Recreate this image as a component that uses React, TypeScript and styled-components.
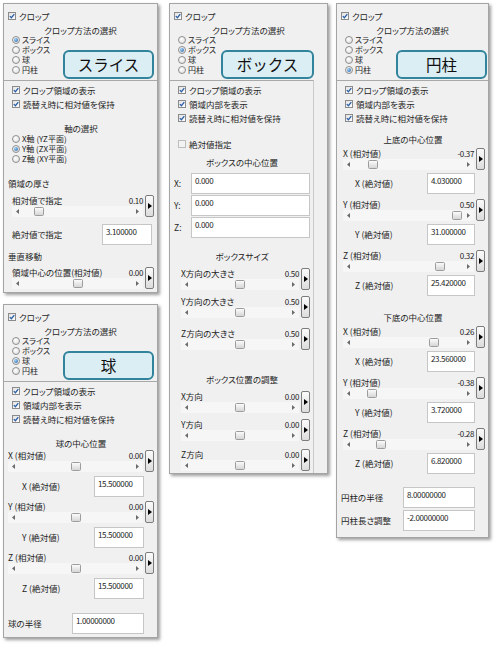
import React from 'react';
import styled, { createGlobalStyle } from 'styled-components';

const GlobalStyle = createGlobalStyle`
  html, body {
    margin: 0;
    padding: 0;
    background: #ffffff;
  }
  body {
    font-family: "Noto Sans CJK JP", "Noto Sans", sans-serif;
  }
`;

const Page = styled.div`
  width: 497px;
  height: 647px;
  box-sizing: border-box;
  padding: 3px 0 0 3px;
  display: flex;
  align-items: flex-start;
  background: #ffffff;
  overflow: hidden;
`;

const Column = styled.div<{ $mr: number }>`
  display: flex;
  flex-direction: column;
  gap: 11px;
  margin-right: ${p => p.$mr}px;
`;

const Panel = styled.div<{ $w: number; $h: number }>`
  width: ${p => p.$w}px;
  height: ${p => p.$h}px;
  box-sizing: border-box;
  border: 1px solid #a4a4a4;
  background: #f0f0f0;
  box-shadow: 2px 2px 3px rgba(0, 0, 0, 0.38);
  display: flex;
  flex-direction: column;
  color: #1d1d1d;
  font-size: 8.5px;
  line-height: 1;
  font-feature-settings: "palt" 1;
  white-space: nowrap;
`;

const Top = styled.div`
  height: 76px;
  box-sizing: border-box;
  padding: 6px 0 0 4px;
  display: flex;
  flex-direction: column;
`;

const CropRow = styled.div`
  display: flex;
  align-items: center;
  gap: 3px;
  height: 12px;
`;

const MethodTitle = styled.div`
  height: 10px;
  line-height: 10px;
  margin-top: 3px;
  text-align: center;
  padding-right: 4px;
`;

const MethodArea = styled.div`
  display: flex;
  align-items: flex-start;
`;

const RadioList = styled.div`
  display: flex;
  flex-direction: column;
  margin-left: 4px;
`;

const RadioRow = styled.div`
  display: flex;
  align-items: center;
  gap: 2px;
  height: 10px;
`;

const RadioLabel = styled.span`
  display: block;
  height: 10px;
  line-height: 10px;
  font-size: 8px;
  overflow: visible;
`;

const Callout = styled.div<{ $w: number; $mr: number }>`
  margin-left: auto;
  margin-right: ${p => p.$mr}px;
  margin-top: 15px;
  width: ${p => p.$w}px;
  height: 29px;
  box-sizing: border-box;
  border: 2px solid #31849b;
  border-radius: 6px;
  background: #dbeef4;
  display: flex;
  align-items: center;
  justify-content: center;
  font-size: 15.5px;
  font-feature-settings: normal;
  color: #101010;
`;

const Lower = styled.div<{ $gutter: number }>`
  flex: 1;
  display: flex;
  flex-direction: column;
  border-top: 1px solid #a9a9a9;
  border-right: ${p => (p.$gutter ? '1px solid #c9c9c9' : 'none')};
  margin-right: ${p => p.$gutter}px;
  padding: 2px 3px 0 4px;
`;

const CheckRow = styled.div<{ $mt?: number }>`
  display: flex;
  align-items: center;
  gap: 3px;
  height: 14px;
  padding-left: 4px;
  margin-top: ${p => p.$mt ?? 0}px;
`;

const Box = styled.span<{ $disabled?: boolean }>`
  width: 8px;
  height: 8px;
  box-sizing: border-box;
  flex-shrink: 0;
  border: 1px solid ${p => (p.$disabled ? '#bdbdbd' : '#8b8b8b')};
  background: ${p => (p.$disabled ? '#f3f3f3' : 'linear-gradient(135deg, #e2e2e2, #ffffff)')};
  display: inline-flex;
  align-items: center;
  justify-content: center;
`;

const RadioDot = styled.span<{ $on: boolean }>`
  width: 8px;
  height: 8px;
  box-sizing: border-box;
  flex-shrink: 0;
  border-radius: 50%;
  border: 1px solid #8f8f8f;
  background: radial-gradient(circle at 40% 35%, #ffffff, #d9d9d9);
  display: inline-flex;
  align-items: center;
  justify-content: center;

  &::after {
    content: '';
    width: 4px;
    height: 4px;
    border-radius: 50%;
    background: ${p => (p.$on ? 'radial-gradient(circle at 35% 35%, #9fd0f5, #1d5ea8)' : 'transparent')};
  }
`;

const SectionTitle = styled.div<{ $mt: number }>`
  height: 12px;
  line-height: 12px;
  margin-top: ${p => p.$mt}px;
  text-align: center;
`;

const Heading = styled.div<{ $mt: number }>`
  height: 12px;
  line-height: 12px;
  margin-top: ${p => p.$mt}px;
`;

const AxisList = styled.div`
  display: flex;
  flex-direction: column;
  padding-left: 4px;
`;

const SliderBlock = styled.div<{ $mt: number; $ml: number }>`
  display: grid;
  grid-template-columns: 1fr 9px;
  grid-template-rows: 11px 11px;
  column-gap: 2px;
  margin-top: ${p => p.$mt}px;
  margin-left: ${p => p.$ml}px;
`;

const SliderHead = styled.div`
  display: flex;
  align-items: center;
  justify-content: space-between;
`;

const Num = styled.span`
  font-family: "Noto Sans CJK JP", "Noto Sans", sans-serif;
  font-size: 8px;
  letter-spacing: -0.35px;
`;

const StepButton = styled.div`
  grid-column: 2;
  grid-row: 1 / span 2;
  box-sizing: border-box;
  border: 1px solid #7c7c7c;
  border-radius: 2px;
  background: linear-gradient(180deg, #fbfbfb, #dcdcdc);
  display: flex;
  align-items: center;
  justify-content: center;
`;

const Track = styled.div`
  position: relative;
  display: flex;
  align-items: center;
  justify-content: space-between;
  padding: 0 4px;
  background: #f6f6f6;
`;

const Thumb = styled.div`
  position: absolute;
  top: 1px;
  width: 10px;
  height: 9px;
  box-sizing: border-box;
  border: 1px solid #9c9c9c;
  border-radius: 1.5px;
  background: linear-gradient(180deg, #fbfbfb, #d6d6d6);
`;

const AbsRow = styled.div<{ $mt: number; $indent: number; $pr: number }>`
  display: flex;
  align-items: center;
  height: 21px;
  margin-top: ${p => p.$mt}px;
  padding-left: ${p => p.$indent}px;
  padding-right: ${p => p.$pr}px;
`;

const AbsLabel = styled.span<{ $w?: number }>`
  flex: ${p => (p.$w ? `0 0 ${p.$w}px` : '1')};
`;

const TextBox = styled.div<{ $w?: number }>`
  flex: ${p => (p.$w ? `0 0 ${p.$w}px` : '1')};
  height: 21px;
  box-sizing: border-box;
  border: 1px solid #c6c6c6;
  background: #ffffff;
  padding: 2px 3px 0;
  line-height: 9px;
`;

const Check = ({ label, mt, off }: { label: string; mt?: number; off?: boolean }) => (
  <CheckRow $mt={mt}>
    <Box $disabled={off}>
      {!off && (
        <svg width="6" height="6" viewBox="0 0 6 6">
          <path d="M0.8 3.1 L2.4 4.7 L5.3 1.1" fill="none" stroke="#2b5fa6" strokeWidth="1.3" />
        </svg>
      )}
    </Box>
    <span>{label}</span>
  </CheckRow>
);

const Radio = ({ label, on }: { label: string; on?: boolean }) => (
  <RadioRow>
    <RadioDot $on={!!on} />
    <RadioLabel>{label}</RadioLabel>
  </RadioRow>
);

const methods = ['スライス', 'ボックス', '球', '円柱'];

const CropHeader = ({ method, calloutW, calloutMr }: { method: number; calloutW: number; calloutMr: number }) => (
  <Top>
    <CropRow>
      <Box>
        <svg width="6" height="6" viewBox="0 0 6 6">
          <path d="M0.8 3.1 L2.4 4.7 L5.3 1.1" fill="none" stroke="#2b5fa6" strokeWidth="1.3" />
        </svg>
      </Box>
      <span>クロップ</span>
    </CropRow>
    <MethodTitle>クロップ方法の選択</MethodTitle>
    <MethodArea>
      <RadioList>
        {methods.map((m, i) => (
          <Radio key={m} label={m} on={i === method} />
        ))}
      </RadioList>
      <Callout $w={calloutW} $mr={calloutMr}>{methods[method]}</Callout>
    </MethodArea>
  </Top>
);

interface SliderProps {
  label: string;
  value: string;
  frac: number;
  mt: number;
  ml: number;
}

const Slider = ({ label, value, frac, mt, ml }: SliderProps) => (
  <SliderBlock $mt={mt} $ml={ml}>
    <SliderHead>
      <span>{label}</span>
      <Num>{value}</Num>
    </SliderHead>
    <StepButton>
      <svg width="4" height="6" viewBox="0 0 4 6">
        <path d="M0 0 L4 3 L0 6 Z" fill="#000" />
      </svg>
    </StepButton>
    <Track>
      <svg width="3" height="5" viewBox="0 0 3 5">
        <path d="M3 0 L0 2.5 L3 5 Z" fill="#6a6a6a" />
      </svg>
      <Thumb style={{ left: `calc(12px + (100% - 34px) * ${frac})` }} />
      <svg width="3" height="5" viewBox="0 0 3 5">
        <path d="M0 0 L3 2.5 L0 5 Z" fill="#6a6a6a" />
      </svg>
    </Track>
  </SliderBlock>
);

interface AbsProps {
  label: string;
  value: string;
  mt: number;
  indent: number;
  pr: number;
  boxW?: number;
  labelW?: number;
}

const AbsField = ({ label, value, mt, indent, pr, boxW, labelW }: AbsProps) => (
  <AbsRow $mt={mt} $indent={indent} $pr={pr}>
    <AbsLabel $w={labelW}>{label}</AbsLabel>
    <TextBox $w={boxW}>
      <Num>{value}</Num>
    </TextBox>
  </AbsRow>
);

// -0.5..0.5 -> 0..1
const rel = (v: number) => v + 0.5;

const SlicePanel = () => (
  <Panel $w={155} $h={290}>
    <CropHeader method={0} calloutW={91} calloutMr={3} />
    <Lower $gutter={0}>
      <Check label="クロップ領域の表示" />
      <Check label="読替え時に相対値を保持" />
      <SectionTitle $mt={11}>軸の選択</SectionTitle>
      <AxisList>
        <Radio label="X軸 (YZ平面)" />
        <Radio label="Y軸 (ZX平面)" on />
        <Radio label="Z軸 (XY平面)" />
      </AxisList>
      <Heading $mt={13}>領域の厚さ</Heading>
      <Slider label="相対値で指定" value="0.10" frac={0.1} mt={6} ml={4} />
      <AbsField label="絶対値で指定" value="3.100000" mt={7} indent={4} pr={2} boxW={50} />
      <Heading $mt={5}>垂直移動</Heading>
      <Slider label="領域中心の位置(相対値)" value="0.00" frac={rel(0)} mt={5} ml={4} />
    </Lower>
  </Panel>
);

const SpherePanel = () => (
  <Panel $w={155} $h={334}>
    <CropHeader method={2} calloutW={91} calloutMr={3} />
    <Lower $gutter={0}>
      <Check label="クロップ領域の表示" />
      <Check label="領域内部を表示" />
      <Check label="読替え時に相対値を保持" />
      <SectionTitle $mt={11}>球の中心位置</SectionTitle>
      <Slider label="X (相対値)" value="0.00" frac={rel(0)} mt={1} ml={0} />
      <AbsField label="X (絶対値)" value="15.500000" mt={4} indent={14} pr={10} boxW={50} />
      <Slider label="Y (相対値)" value="0.00" frac={rel(0)} mt={4} ml={0} />
      <AbsField label="Y (絶対値)" value="15.500000" mt={4} indent={14} pr={10} boxW={50} />
      <Slider label="Z (相対値)" value="0.00" frac={rel(0)} mt={4} ml={0} />
      <AbsField label="Z (絶対値)" value="15.500000" mt={4} indent={14} pr={10} boxW={50} />
      <AbsField label="球の半径" value="1.00000000" mt={14} indent={0} pr={10} boxW={72} />
    </Lower>
  </Panel>
);

const BoxPanel = () => (
  <Panel $w={159} $h={471}>
    <CropHeader method={1} calloutW={93} calloutMr={13} />
    <Lower $gutter={13}>
      <Check label="クロップ領域の表示" />
      <Check label="領域内部を表示" />
      <Check label="読替え時に相対値を保持" />
      <Check label="絶対値指定" mt={12} off />
      <SectionTitle $mt={5}>ボックスの中心位置</SectionTitle>
      <AbsField label="X:" value="0.000" mt={5} indent={0} pr={0} labelW={17} />
      <AbsField label="Y:" value="0.000" mt={1} indent={0} pr={0} labelW={17} />
      <AbsField label="Z:" value="0.000" mt={1} indent={0} pr={0} labelW={17} />
      <SectionTitle $mt={12}>ボックスサイズ</SectionTitle>
      <Slider label="X方向の大きさ" value="0.50" frac={0.5} mt={6} ml={7} />
      <Slider label="Y方向の大きさ" value="0.50" frac={0.5} mt={6} ml={7} />
      <Slider label="Z方向の大きさ" value="0.50" frac={0.5} mt={10} ml={7} />
      <SectionTitle $mt={23}>ボックス位置の調整</SectionTitle>
      <Slider label="X方向" value="0.00" frac={rel(0)} mt={6} ml={7} />
      <Slider label="Y方向" value="0.00" frac={rel(0)} mt={6} ml={7} />
      <Slider label="Z方向" value="0.00" frac={rel(0)} mt={8} ml={7} />
    </Lower>
  </Panel>
);

const CylinderPanel = () => (
  <Panel $w={153} $h={535}>
    <CropHeader method={3} calloutW={91} calloutMr={1} />
    <Lower $gutter={0}>
      <Check label="クロップ領域の表示" />
      <Check label="領域内部を表示" />
      <Check label="読替え時に相対値を保持" />
      <SectionTitle $mt={8}>上底の中心位置</SectionTitle>
      <Slider label="X (相対値)" value="-0.37" frac={rel(-0.37)} mt={3} ml={2} />
      <AbsField label="X (絶対値)" value="4.030000" mt={3} indent={14} pr={10} boxW={48} />
      <Slider label="Y (相対値)" value="0.50" frac={rel(0.5)} mt={5} ml={2} />
      <AbsField label="Y (絶対値)" value="31.000000" mt={3} indent={14} pr={10} boxW={48} />
      <Slider label="Z (相対値)" value="0.32" frac={rel(0.32)} mt={5} ml={2} />
      <AbsField label="Z (絶対値)" value="25.420000" mt={3} indent={14} pr={10} boxW={48} />
      <SectionTitle $mt={15}>下底の中心位置</SectionTitle>
      <Slider label="X (相対値)" value="0.26" frac={rel(0.26)} mt={3} ml={2} />
      <AbsField label="X (絶対値)" value="23.560000" mt={3} indent={14} pr={10} boxW={48} />
      <Slider label="Y (相対値)" value="-0.38" frac={rel(-0.38)} mt={5} ml={2} />
      <AbsField label="Y (絶対値)" value="3.720000" mt={3} indent={14} pr={10} boxW={48} />
      <Slider label="Z (相対値)" value="-0.28" frac={rel(-0.28)} mt={5} ml={2} />
      <AbsField label="Z (絶対値)" value="6.820000" mt={3} indent={14} pr={10} boxW={48} />
      <AbsField label="円柱の半径" value="8.00000000" mt={13} indent={0} pr={10} boxW={72} />
      <AbsField label="円柱長さ調整" value="-2.00000000" mt={2} indent={0} pr={10} boxW={72} />
    </Lower>
  </Panel>
);

const App: React.FC = () => {
  return (
    <>
      <GlobalStyle />
      <Page>
        <Column $mr={11}>
          <SlicePanel />
          <SpherePanel />
        </Column>
        <Column $mr={8}>
          <BoxPanel />
        </Column>
        <Column $mr={0}>
          <CylinderPanel />
        </Column>
      </Page>
    </>
  );
};

export default App;
